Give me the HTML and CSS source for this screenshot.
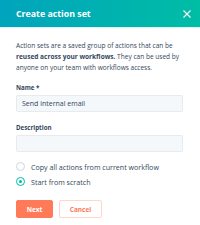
FILE: index.html
```html
<!DOCTYPE html>
<html>
<head>
<meta charset="utf-8">
<link rel="stylesheet" href="styles.css">
</head>
<body>
<div class="modal">
  <div class="header">
    <span class="title">Create action set</span>
    <svg class="close" width="8" height="8" viewBox="0 0 8 8"><path d="M0.5 0.5 L7.5 7.5 M7.5 0.5 L0.5 7.5" stroke="#fff" stroke-width="1.1" fill="none"/></svg>
  </div>
  <div class="body">
    <p class="intro">Action sets are a saved group of actions that can be<br><b>reused across your workflows.</b> They can be used by<br>anyone on your team with workflows access.</p>
    <div class="field">
      <div class="label">Name *</div>
      <div class="input">Send internal email</div>
    </div>
    <div class="field">
      <div class="label">Description</div>
      <div class="input"></div>
    </div>
    <div class="radios">
      <div class="radio"><span class="dot"></span>Copy all actions from current workflow</div>
      <div class="radio"><span class="dot on"></span>Start from scratch</div>
    </div>
    <div class="buttons">
      <div class="btn primary">Next</div>
      <div class="btn secondary">Cancel</div>
    </div>
  </div>
</div>
</body>
</html>
```
FILE: styles.css
```css
html, body { margin: 0; padding: 0; background: #fff; }
body { width: 200px; height: 225px; overflow: hidden; font-family: "Open Sans", "Liberation Sans", sans-serif; color: #33475b; }
.header {
  height: 27px;
  background: linear-gradient(90deg, #00a4bd 0%, #00bda5 100%);
  display: flex; align-items: center; justify-content: space-between;
  padding: 0 9px 0 16px;
  border-bottom: 1px solid #dff3f4;
}
.title { color: #fff; font-weight: bold; font-size: 8.8px; }
.body { padding: 0 17px 0 16px; }
.intro { margin: 11.5px 0 0; font-size: 6.55px; line-height: 11px; white-space: nowrap; }
.intro b { color: #33475b; }
.field { margin-top: 11.5px; }
.field + .field { margin-top: 12px; }
.label { font-size: 6.2px; font-weight: bold; line-height: 8px; }
.input {
  margin-top: 3px; height: 17px; box-sizing: border-box;
  background: #f5f8fa; border: 1px solid #e6ebf0; border-radius: 1.5px;
  font-size: 7px; line-height: 15px; padding: 0 5px;
}
.radios { margin-top: 10px; display: flex; flex-direction: column; gap: 6px; }
.radio { display: flex; align-items: center; font-size: 7.1px; line-height: 8px; white-space: nowrap; }
.dot { width: 7px; height: 7px; border: 1px solid #cbd6e2; border-radius: 50%; margin-right: 6px; box-sizing: content-box; position: relative; background: #fff; flex: none; }
.dot.on { border-color: #00bda5; }
.dot.on::after { content: ""; position: absolute; left: 2px; top: 2px; width: 3px; height: 3px; border-radius: 50%; background: #00bda5; }
.buttons { margin-top: 14px; display: flex; gap: 6px; }
.btn { height: 18px; box-sizing: border-box; display: flex; align-items: center; justify-content: center; font-size: 6.5px; font-weight: bold; border-radius: 2px; }
.primary { width: 37px; background: #ff7a59; color: #fff; border: 1px solid #ff7a59; }
.secondary { width: 43px; background: #fff; color: #ff7a59; border: 1px solid #ffd6c8; }
```
